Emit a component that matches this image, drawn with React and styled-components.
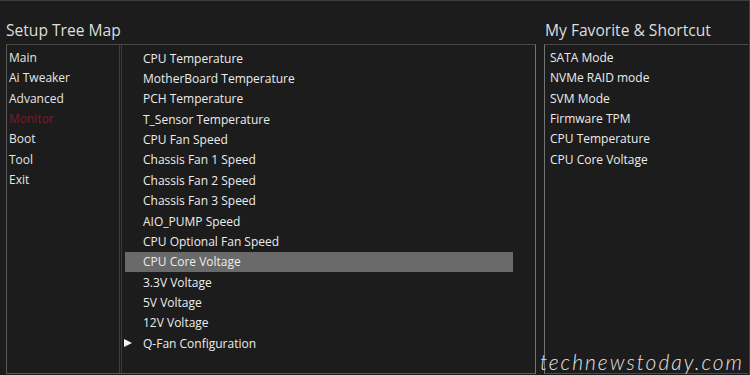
import styled, { createGlobalStyle } from "styled-components";

const GlobalStyle = createGlobalStyle`
    html, body {
        margin: 0;
        padding: 0;
        background: #1c1c1c;
    }
    * {
        box-sizing: border-box;
    }
`;

const menu = ["Main", "Ai Tweaker", "Advanced", "Monitor", "Boot", "Tool", "Exit"];

const items = [
    "CPU Temperature",
    "MotherBoard Temperature",
    "PCH Temperature",
    "T_Sensor Temperature",
    "CPU Fan Speed",
    "Chassis Fan 1 Speed",
    "Chassis Fan 2 Speed",
    "Chassis Fan 3 Speed",
    "AIO_PUMP Speed",
    "CPU Optional Fan Speed",
    "CPU Core Voltage",
    "3.3V Voltage",
    "5V Voltage",
    "12V Voltage",
    "Q-Fan Configuration",
];

const favorites = [
    "SATA Mode",
    "NVMe RAID mode",
    "SVM Mode",
    "Firmware TPM",
    "CPU Temperature",
    "CPU Core Voltage",
];

export default function App() {
    return (
        <>
            <GlobalStyle />
            <SCREEN>
                <SECTION $width={530}>
                    <TITLE>Setup Tree Map</TITLE>
                    <PANEL>
                        <MENU>
                            {menu.map((m) => (
                                <MENUITEM key={m} $active={m === "Monitor"}>{m}</MENUITEM>
                            ))}
                        </MENU>
                        <LIST>
                            {items.map((it) => (
                                <ROW key={it} $selected={it === "CPU Core Voltage"}>
                                    <MARK>
                                        {it === "Q-Fan Configuration" && (
                                            <svg width="8" height="8" viewBox="0 0 8 8">
                                                <path d="M0 0 L8 4 L0 8 Z" fill="#f2f2f2" />
                                            </svg>
                                        )}
                                    </MARK>
                                    <span>{it}</span>
                                </ROW>
                            ))}
                        </LIST>
                    </PANEL>
                </SECTION>
                <SECTION $width={204}>
                    <TITLE $shift={1}>My Favorite & Shortcut</TITLE>
                    <FAVPANEL>
                        {favorites.map((f) => (
                            <FAV key={f}>{f}</FAV>
                        ))}
                    </FAVPANEL>
                </SECTION>
                <MARKWATER>technewstoday.com</MARKWATER>
            </SCREEN>
        </>
    );
}

const SCREEN = styled.div`
    position: relative;
    width: 750px;
    height: 375px;
    display: flex;
    gap: 8px;
    padding-left: 6px;
    border-top: 1px solid #3e3e3e;
    border-right: 1px solid #3e3e3e;
    background: #1c1c1c;
    overflow: hidden;
    font-family: "Open Sans", "Noto Sans", sans-serif;
`;

const SECTION = styled.div`
    width: ${(p) => p.$width}px;
    display: flex;
    flex-direction: column;
`;

const TITLE = styled.div`
    height: 43px;
    padding: 18px 0 0 ${(p) => p.$shift || 0}px;
    font-size: 15.6px;
    line-height: 22px;
    color: #dedede;
    white-space: nowrap;
`;

const PANEL = styled.div`
    flex: 1;
    display: flex;
    gap: 1px;
    border: 1px solid #5a5a5a;
    border-top-color: #4a4a4a;
    border-right-color: #747474;
    margin-bottom: 1px;
`;

const MENU = styled.div`
    width: 113px;
    padding-top: 3px;
    border-right: 1px solid #3e3e3e;
`;

const MENUITEM = styled.div`
    height: 20.36px;
    line-height: 20.36px;
    padding-left: 2px;
    font-size: 12px;
    color: ${(p) => (p.$active ? "#7a1b2b" : "#e6e6e6")};
`;

const LIST = styled.div`
    flex: 1;
    padding-top: 3px;
    border-left: 1px solid #3a3a3a;
`;

const ROW = styled.div`
    display: flex;
    align-items: center;
    width: 388px;
    height: 20.36px;
    margin-left: 3px;
    font-size: 12px;
    color: #ececec;
    background: ${(p) => (p.$selected ? "#6a6a6a" : "transparent")};
`;

const MARK = styled.div`
    width: 19px;
    display: flex;
    align-items: center;
    margin-left: -1px;
`;

const FAVPANEL = styled.div`
    flex: 1;
    padding: 3px 0 0 5px;
    border: 1px solid #4a4a4a;
    border-left-color: #747474;
    border-right: none;
    margin-bottom: 1px;
`;

const FAV = styled.div`
    height: 20.36px;
    line-height: 20.36px;
    font-size: 12px;
    color: #ececec;
`;

const MARKWATER = styled.div`
    position: absolute;
    right: 5px;
    bottom: 1px;
    font-family: "Lato", "Open Sans", sans-serif;
    font-style: italic;
    font-weight: 300;
    font-size: 21px;
    letter-spacing: 2px;
    color: #e2e2e2;
`;
